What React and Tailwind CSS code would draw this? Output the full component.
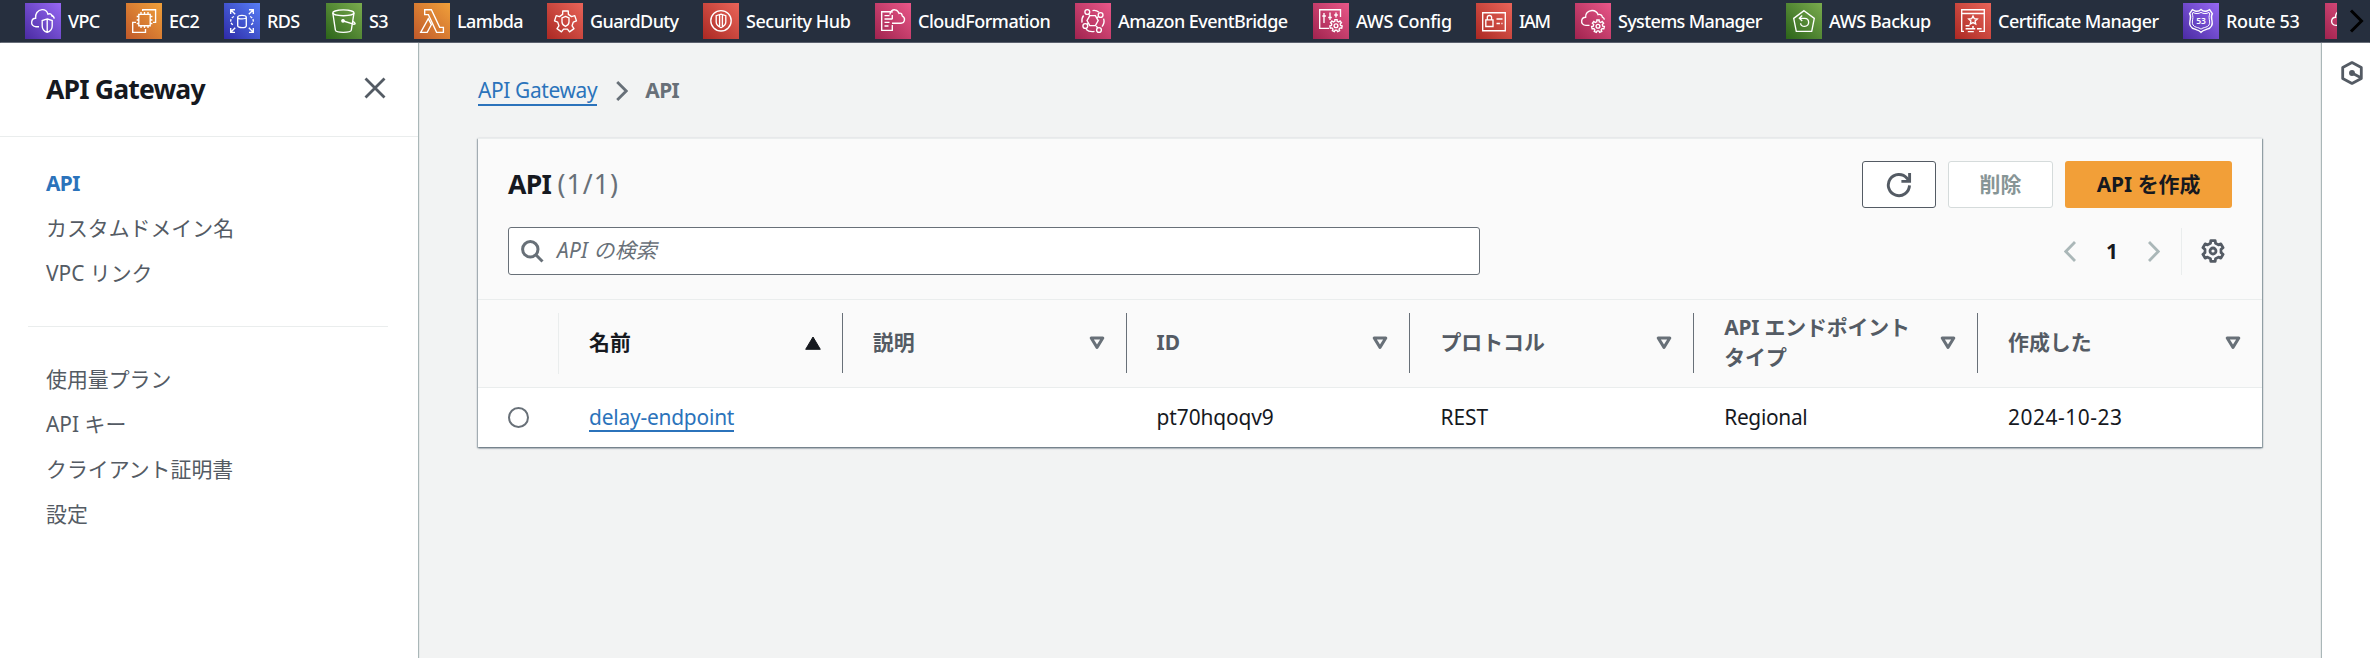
import React from "react";

const gear = (cx, cy, outer, inner, teeth) => {
  const pts = [];
  const step = (Math.PI * 2) / teeth;
  for (let i = 0; i < teeth; i++) {
    const a = -Math.PI / 2 + i * step;
    [[-0.3, inner], [-0.2, outer], [0.2, outer], [0.3, inner]].forEach(([d, r]) => {
      pts.push(`${(cx + Math.cos(a + d * step) * r).toFixed(2)} ${(cy + Math.sin(a + d * step) * r).toFixed(2)}`);
    });
  }
  return `M${pts.join("L")}Z`;
};

const glyphs = {
  vpc: (
    <>
      <path d="M14 23.7H11C7.8 23.7 6.3 21.3 6.7 18.8C7 16.6 8.7 15.3 10.6 15.3C10 11 12.6 7 17 6.7C20.4 6.5 22.2 8.6 23 11.2C25.3 10 27.4 11.6 27.4 14" />
      <path d="M26 12.2C28 12.6 29 14 29.3 15.6" />
      <path d="M22.2 15.9L27.2 17.6V23C27.2 26.2 25.2 28.4 22.2 29.4C19.2 28.4 17.2 26.2 17.2 23V17.6ZM22.2 15.9V29.4" />
    </>
  ),
  ec2: (
    <>
      <path d="M12.8 11.3h11.4v11.4H12.8zM15 9v2M18.5 9v2M22 9v2M15 23v2M18.5 23v2M22 23v2M10.7 13.5h2M10.7 17h2M10.7 20.5h2M24.4 13.5h2M24.4 17h2M24.4 20.5h2" />
      <path d="M16.7 8V6.7H29.6V19.3H27" />
      <path d="M10 19.3H6.7V29.3H19.5V26" />
    </>
  ),
  rds: (
    <>
      <path d="M13.7 14.2C13.7 11.7 22.3 11.7 22.3 14.2V22.8C22.3 25.3 13.7 25.3 13.7 22.8ZM13.7 14.2C13.7 16.4 22.3 16.4 22.3 14.2" />
      <path d="M6.7 11V6.7H11M7 7l4.2 4.2M25 6.7h4.3V11M29 7l-4.2 4.2M6.7 25v4.3H11M7 29l4.2-4.2M25 29.3h4.3V25M29 29l-4.2-4.2" />
      <path d="M10 13.5C5.6 15.5 5.6 20.5 10 22.5M26 13.5C30.4 15.5 30.4 20.5 26 22.5" strokeDasharray="2.6 1.3" />
    </>
  ),
  s3: (
    <>
      <ellipse cx="17.4" cy="9.8" rx="10.6" ry="2.9" />
      <path d="M6.8 9.8L9.4 27.2C10 30 24.6 30 25.3 27.2L28 9.8" />
      <path d="M17.4 18L27.4 21.2C30.6 21.4 28.8 19.4 26.6 18.4" />
      <circle cx="17" cy="17.8" r="1.2" fill="white" />
    </>
  ),
  lambda: (
    <>
      <path d="M10.7 6.7H17.4L25.7 24.3H29.4V29.3H22.6L14.4 11.6H10.7Z" />
      <path d="M14.3 15.6L17.4 21.6L13.2 29.3H6.7Z" />
    </>
  ),
  guard: (
    <>
      <path d={gear(18.5, 18.6, 11, 7.8, 5)} strokeLinejoin="round" />
      <path d="M18.5 13.4L22 15V19C22 21 20.6 22.5 18.5 23.4C16.4 22.5 15 21 15 19V15Z" />
    </>
  ),
  hub: (
    <>
      <circle cx="18" cy="17.8" r="10.2" />
      <path d="M18 11.2L22.8 12.7V19C22.8 21.8 20.9 23.4 18 24.6C15.1 23.4 13.2 21.8 13.2 19V12.7ZM16.6 12v12M19.4 12v12" />
    </>
  ),
  cloudformation: (
    <>
      <path d="M17 9.8V8.7H6.7V27.3H17.3V22M17.3 12V16M9.5 12.6h5M9.5 16h8M9.5 19.4h5M9.5 23h4" />
      <path d="M15 11.5C15 8 17.6 6.6 20 6.8C22.2 7 23.4 8.4 24 10.4C26 9.6 27 11 27.2 12.8C31 14.8 29.8 20.2 26 20.2H17" />
    </>
  ),
  eventbridge: (
    <>
      <path d="M14.8 12.6H20.4L23.2 17.6L20.4 22.6H14.8L12 17.6Z" />
      <circle cx="12.3" cy="9" r="2.4" />
      <circle cx="25.6" cy="12" r="2.4" />
      <circle cx="10.3" cy="23" r="2.4" />
      <circle cx="24" cy="27" r="2.4" />
      <path d="M13.5 11L14.8 12.6M23.5 13.6L21.8 15M12.2 21.5L13.3 20M22.8 25L21.2 23M17.5 7.6C20 7 22.5 8 24 9.2M8.6 12.5C7 14.5 6.6 17 7 19.6M28.6 15.6C29.6 18.5 28.8 21.3 27 23.6M11 26.2C13 28.2 16 29 19.5 28.4" />
    </>
  ),
  config: (
    <>
      <path d="M16 25.3H6.7V6.7H27.5V14M11 10V20M17 9.5V17M23 9.5V14.5M9.3 13h3.6M15.2 14.5h3.6M21.2 12h3.6" />
      <path d={gear(23, 22.7, 6.2, 4.6, 7)} />
      <circle cx="23" cy="22.7" r="1.9" />
    </>
  ),
  iam: (
    <>
      <path d="M6.7 9.7H29.3V27.7H6.7Z" />
      <path d="M9.8 16.8H17V23.5H9.8ZM11.3 16.6V14.6C11.3 11.8 15.6 11.8 15.6 14.6V16.6M20.5 16H26.5M20.5 20.5h3.4M25.4 20.5h1.1" />
    </>
  ),
  systems: (
    <>
      <path d="M14.5 22.3H11C7.8 22.3 6.3 20 6.7 17.6C7 15.4 8.7 14.3 10.6 14.3C10.2 10.6 13 7.7 17 7.5C20.4 7.4 22.2 9.4 23 11.6C25.3 10.8 27.2 12.2 27.4 14.2C28.6 14.8 29.2 15.4 29.4 16.6" />
      <path d={gear(23, 23.3, 6.4, 4.7, 7)} />
      <circle cx="23" cy="23.3" r="1.9" />
    </>
  ),
  backup: (
    <>
      <path d="M18 7.7L28.3 15.4L25.7 28.3H10.3L7.7 15.4Z" />
      <path d="M13.6 15.3H18.6C24 15.3 24 23.4 18.6 23.4C16.3 23.4 14.8 22.2 14.6 20.2M16.2 12.6L13.4 15.3L16.2 18" />
    </>
  ),
  certificate: (
    <>
      <path d="M9 28.3H6.7V6.7H29.3V28.3H24M6.7 10.5H29.3" />
      <path d="M18 13L19.3 15.7L22.3 16.1L20.1 18.1L20.7 21L18 19.6L15.3 21L15.9 18.1L13.7 16.1L16.7 15.7ZM10.6 22.7h4M17 24h2M10.6 25.7h9.6M22 25.7h4.6M12.8 28.6h6" />
    </>
  ),
  route: (
    <>
      <path d="M9.4 6.7L12.2 8C14.4 8.6 16.4 8 18 6.5C19.6 8 21.6 8.6 23.8 8L26.6 6.7L29.4 10.8C27.6 13 28.4 15 29 17.6C30 22 28 25 24 26.2C21.5 27 19.3 27.6 18 29.4C16.7 27.6 14.5 27 12 26.2C8 25 6 22 7 17.6C7.6 15 8.4 13 6.6 10.8Z" />
      <path d="M10 9.4C12.5 11 15.6 11 18 9.4C20.4 11 23.5 11 26 9.4L26.8 11C25.6 13.6 26.2 15.5 26.6 18C27.2 21.4 25.6 23.4 22.8 24.2C20.8 24.7 19 25.2 18 26.2C17 25.2 15.2 24.7 13.2 24.2C10.4 23.4 8.8 21.4 9.4 18C9.8 15.5 10.4 13.6 9.2 11Z" strokeWidth="1" />
      <text x="18" y="21" fill="white" stroke="none" fontSize="8.5" fontFamily="Noto Sans" fontWeight="600" textAnchor="middle">53</text>
    </>
  ),
  cloud: <path d="M14.5 22.3H11C7.8 22.3 6.3 20 6.7 17.6C7 15.4 8.7 14.3 10.6 14.3C10.2 10.6 13 7.7 17 7.5" />,
};

const purple = "bg-linear-45 from-[#4b2ba3] to-[#9768f4]";
const orange = "bg-linear-45 from-[#c0592a] to-[#f0a03a]";
const blue = "bg-linear-45 from-[#2f29a8] to-[#587ef6]";
const green = "bg-linear-45 from-[#2c651a] to-[#7aac4e]";
const red = "bg-linear-45 from-[#ab2823] to-[#e96459]";
const pink = "bg-linear-45 from-[#a1234f] to-[#e95789]";

const services = [
  ["VPC", "vpc", purple, "w-[101px]", "tracking-[-0.6px]"],
  ["EC2", "ec2", orange, "w-[98px]", "tracking-[-0.5px]"],
  ["RDS", "rds", blue, "w-[102px]", "tracking-[-0.6px]"],
  ["S3", "s3", green, "w-[88px]", "tracking-[-0.6px]"],
  ["Lambda", "lambda", orange, "w-[133px]", "tracking-[-0.6px]"],
  ["GuardDuty", "guard", red, "w-[156px]", "tracking-[-0.6px]"],
  ["Security Hub", "hub", red, "w-[172px]", "tracking-[-0.45px]"],
  ["CloudFormation", "cloudformation", pink, "w-[200px]", "tracking-[-0.5px]"],
  ["Amazon EventBridge", "eventbridge", pink, "w-[238px]", "tracking-[-0.56px]"],
  ["AWS Config", "config", pink, "w-[163px]", "tracking-[-0.3px]"],
  ["IAM", "iam", red, "w-[99px]", "tracking-[-1.3px]"],
  ["Systems Manager", "systems", pink, "w-[211px]", "tracking-[-0.65px]"],
  ["AWS Backup", "backup", green, "w-[169px]", "tracking-[-0.42px]"],
  ["Certificate Manager", "certificate", red, "w-[228px]", "tracking-[-0.55px]"],
  ["Route 53", "route", purple, "w-[142px]", "tracking-[-0.35px]"],
];

function ServiceIcon({ name, tone }) {
  return (
    <span className={`block size-9 shrink-0 ${tone}`}>
      <svg viewBox="0 0 36 36" className="size-9" fill="none" stroke="white" strokeWidth="1.35">
        {glyphs[name]}
      </svg>
    </span>
  );
}

function TopBar() {
  return (
    <header className="flex h-[43px] shrink-0 border-b border-[#5b606d] bg-[#262f3e] pl-[25px]">
      <div className="flex w-[2312px] shrink-0 overflow-hidden pt-[3px]">
        {services.map(([label, icon, tone, width, tracking]) => (
          <a key={label} className={`flex h-9 shrink-0 items-center gap-[7px] ${width}`}>
            <ServiceIcon name={icon} tone={tone} />
            <span className={`text-[18px] font-medium whitespace-nowrap text-white ${tracking}`}>{label}</span>
          </a>
        ))}
        <ServiceIcon name="cloud" tone={pink} />
      </div>
      <svg viewBox="0 0 33 42" className="h-[42px] w-[33px] shrink-0" fill="none" stroke="#000" strokeWidth="3">
        <path d="M14 10.5L24.5 21L14 31.5" />
      </svg>
    </header>
  );
}

function NavItem({ children, active }) {
  return (
    <a
      className={`flex h-[45px] items-center pl-[46px] ${
        active ? "font-bold tracking-[-0.6px] text-[#2b73bb]" : "text-[#545b64]"
      }`}
    >
      {children}
    </a>
  );
}

function Sidebar() {
  return (
    <aside className="z-10 w-[418px] shrink-0 bg-white shadow-[1px_0_1px_0_#aab7b8]">
      <div className="flex h-[94px] items-start justify-between border-b border-[#eaeded] pt-[25px] pr-[32px] pl-[46px]">
        <h2 className="text-[26.6px] leading-[42px] font-bold tracking-[-0.85px] text-[#16191f]">API Gateway</h2>
        <svg viewBox="0 0 22 22" className="mt-[9px] size-[22px]" fill="none" stroke="#545b64" strokeWidth="2.8">
          <path d="M1.5 1.5L20.5 20.5M20.5 1.5L1.5 20.5" />
        </svg>
      </div>
      <nav className="pt-[23px]">
        <NavItem active>API</NavItem>
        <NavItem>カスタムドメイン名</NavItem>
        <NavItem>VPC リンク</NavItem>
        <hr className="mt-[31px] mr-[30px] mb-[29px] ml-[28px] border-[#eaeded]" />
        <NavItem>使用量プラン</NavItem>
        <NavItem>API キー</NavItem>
        <NavItem>クライアント証明書</NavItem>
        <NavItem>設定</NavItem>
      </nav>
    </aside>
  );
}

function SortIcon({ filled }) {
  return (
    <svg viewBox="0 0 16 14" className="h-[14px] w-4 shrink-0">
      {filled ? (
        <path d="M8 1L15.3 13.3H.7Z" fill="#16191f" stroke="#16191f" strokeWidth="1" strokeLinejoin="round" />
      ) : (
        <path d="M2.2 2H13.8L8 11.4Z" fill="none" stroke="#687078" strokeWidth="3" strokeLinejoin="round" />
      )}
    </svg>
  );
}

function HeaderCell({ children, sorted, last }) {
  return (
    <div
      className={`my-[13px] flex h-[60px] w-[283.8px] items-center justify-between pr-[21px] pl-[30px] leading-[30px] font-bold ${
        last ? "" : "border-r border-[#687078]"
      } ${sorted ? "text-[#16191f]" : "text-[#545b64]"}`}
    >
      <span className="-mt-[2px]">{children}</span>
      <SortIcon filled={sorted} />
    </div>
  );
}

function Cell({ children }) {
  return <div className="flex w-[283.8px] items-center pl-[30px]">{children}</div>;
}

function ApiTable() {
  return (
    <section className="w-[1784px] bg-white shadow-[0_1px_2px_0_#5f6b7a,1px_1px_1px_0_#aab7b8,-1px_1px_1px_0_#c5cccd]">
      <div className="h-[161px] border-t border-[#eaeded] bg-[#fafafa] px-[30px] pt-[22px]">
        <div className="flex h-[47px] items-center justify-between">
          <h1 className="-mt-[2px] text-[26.6px] font-bold tracking-[-0.7px] text-[#16191f]">
            API <span className="font-normal tracking-[1.1px] text-[#687078]">(1/1)</span>
          </h1>
          <div className="flex gap-3 font-bold">
            <button className="flex h-[47px] w-[74px] items-center justify-center rounded-[3px] border border-[#545b64] bg-white">
              <svg viewBox="0 0 26 26" className="size-[26px]" fill="none" stroke="#545b64" strokeWidth="2.9">
                <path d="M23.5 13.4A10.6 10.6 0 1 1 21 6.2L23 8.6" />
                <path d="M23.6 1V9.4H15.4" />
              </svg>
            </button>
            <button className="h-[47px] w-[105px] rounded-[3px] border border-[#d5dbdb] bg-white pb-[2px] text-[#879596]">削除</button>
            <button className="h-[47px] w-[167px] rounded-[3px] bg-[#f29f38] pb-[2px] text-[#16191f]">API を作成</button>
          </div>
        </div>
        <div className="mt-[19px] flex items-center justify-between">
          <div className="flex h-[48px] w-[972px] items-center gap-[13px] rounded-[3px] border border-[#687078] bg-white pl-[12px] text-[#687078] italic">
            <svg viewBox="0 0 23 23" className="size-[23px]" fill="none" stroke="#687078" strokeWidth="3">
              <circle cx="9.3" cy="9.3" r="7.7" />
              <path d="M14.8 14.8L21.5 21.5" />
            </svg>
            <span className="-mt-[2px] tracking-[0.2px]">API の検索</span>
          </div>
          <div className="flex h-[47px] items-center pr-[7px]">
            <svg viewBox="0 0 12 21" className="h-[21px] w-3" fill="none" stroke="#aab7b8" strokeWidth="2.8">
              <path d="M11 1L1.8 10.5L11 20" />
            </svg>
            <span className="w-[72px] text-center font-bold text-[#16191f]">1</span>
            <svg viewBox="0 0 12 21" className="h-[21px] w-3" fill="none" stroke="#aab7b8" strokeWidth="2.8">
              <path d="M1 1L10.2 10.5L1 20" />
            </svg>
            <span className="mr-[19px] ml-[21px] h-[47px] w-px bg-[#eaeded]" />
            <svg viewBox="0 0 24 24" className="size-6" fill="none" stroke="#545b64" strokeWidth="2.8" strokeLinejoin="round">
              <path d={gear(12, 12, 10.6, 8.2, 6)} />
              <circle cx="12" cy="12" r="3" />
            </svg>
          </div>
        </div>
      </div>
      <div className="flex h-[89px] border-y border-[#eaeded] bg-[#fafafa]">
        <div className="my-[13px] w-[81px] shrink-0 border-r border-[#eaeded]" />
        <HeaderCell sorted>名前</HeaderCell>
        <HeaderCell>説明</HeaderCell>
        <HeaderCell>ID</HeaderCell>
        <HeaderCell>プロトコル</HeaderCell>
        <HeaderCell>
          <span className="tracking-[-0.15px]">API エンドポイント</span>
          <br />
          タイプ
        </HeaderCell>
        <HeaderCell last>作成した</HeaderCell>
      </div>
      <div className="flex h-[59px] pb-px text-[#16191f]">
        <div className="flex w-[81px] shrink-0 items-center pl-[30px]">
          <span className="size-[21px] rounded-full border-2 border-[#687078] bg-white" />
        </div>
        <Cell>
          <a className="mt-[3px] border-b-2 border-[#2b73bb] leading-[25px] tracking-[-0.2px] text-[#2b73bb]">delay-endpoint</a>
        </Cell>
        <Cell />
        <Cell>
          <span className="tracking-[-0.1px]">pt70hqoqv9</span>
        </Cell>
        <Cell>REST</Cell>
        <Cell>
          <span className="tracking-[-0.3px]">Regional</span>
        </Cell>
        <Cell>
          <span className="tracking-[0.55px]">2024-10-23</span>
        </Cell>
      </div>
    </section>
  );
}

export default function App() {
  return (
    <div className="flex h-[658px] w-[2370px] flex-col overflow-hidden bg-[#f2f3f3] font-['Noto_Sans','Noto_Sans_CJK_JP',sans-serif] text-[20.9px] leading-[30px]">
      <TopBar />
      <div className="flex min-h-0 flex-1">
        <Sidebar />
        <main className="flex-1 pl-[60px]">
          <nav className="flex h-[95px] items-start pt-[34px]">
            <a className="border-b-2 border-[#2b73bb] leading-[27px] tracking-[-0.35px] text-[#2b73bb]">API Gateway</a>
            <svg viewBox="0 0 12 20" className="mt-[4px] mr-[17px] ml-[19px] h-5 w-3" fill="none" stroke="#687078" strokeWidth="2.8">
              <path d="M1.2 1L10.2 10L1.2 19" />
            </svg>
            <span className="leading-[27px] font-bold tracking-[-0.6px] text-[#687078]">API</span>
          </nav>
          <ApiTable />
        </main>
        <aside className="w-[48px] shrink-0 bg-white pt-[18px] pl-[19px] shadow-[-1px_0_1px_0_#aab7b8]">
          <svg viewBox="0 0 22 24" className="h-6 w-[22px]" fill="none" stroke="#545b64" strokeWidth="2.8" strokeLinejoin="round">
            <path d="M11 1.6L20.3 6.6V17.4L11 22.4L1.7 17.4V6.6Z" />
            <circle cx="11" cy="12" r="2.2" fill="#545b64" strokeWidth="1.5" />
            <path d="M11 12L20 16.8" />
          </svg>
        </aside>
      </div>
    </div>
  );
}
